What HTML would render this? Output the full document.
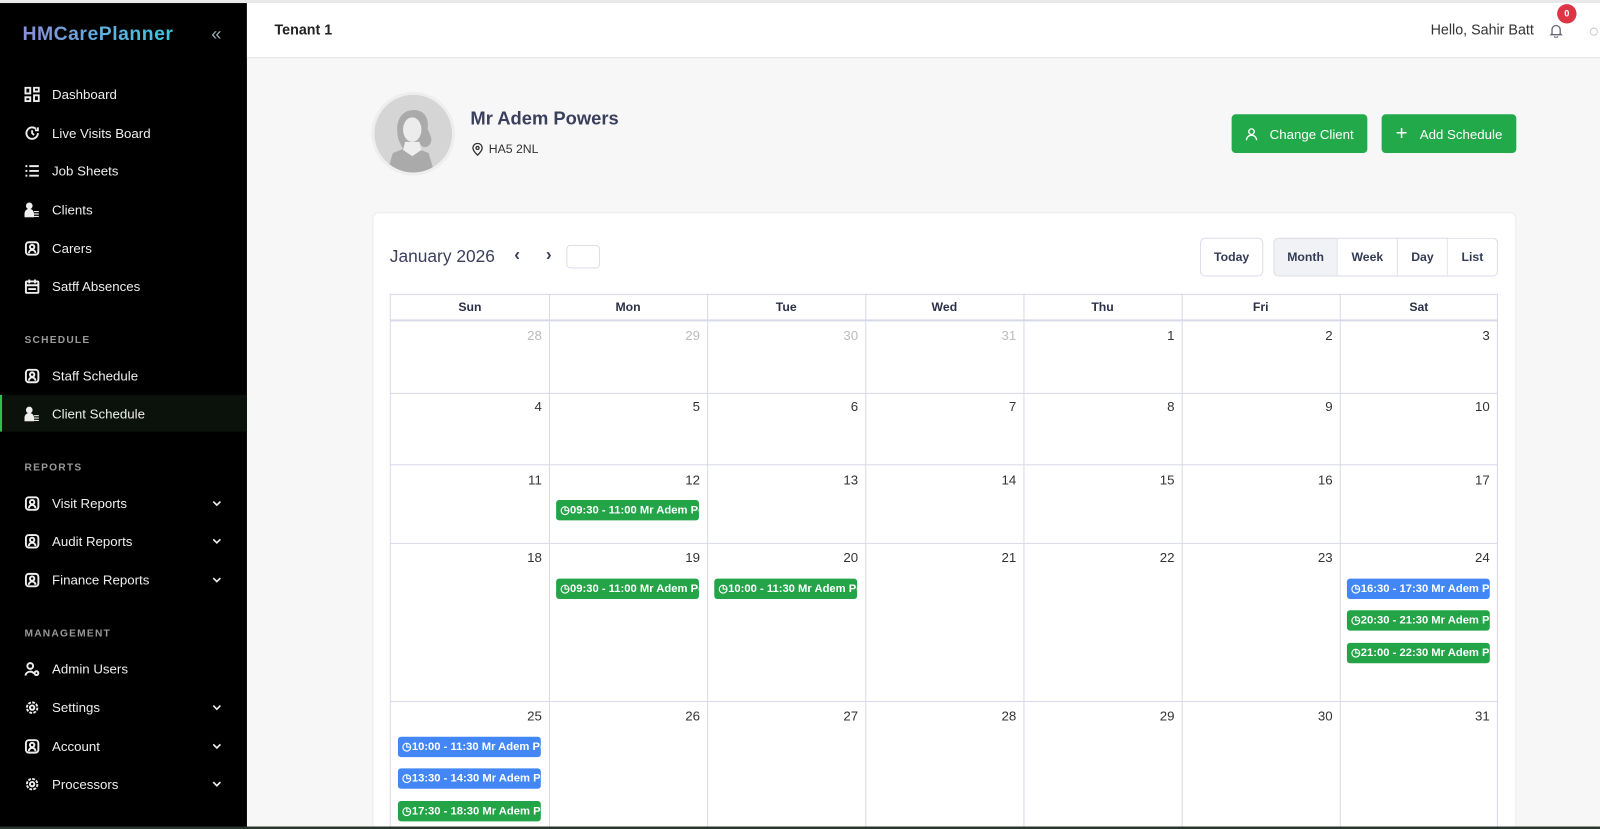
<!DOCTYPE html>
<html><head><meta charset="utf-8"><style>
*{box-sizing:border-box;margin:0;padding:0}
html,body{width:1600px;height:829px;overflow:hidden;background:#f7f7f8}
body{font-family:"Liberation Sans",sans-serif;position:relative}
#w{position:absolute;left:0;top:0;width:1568px;height:813px;transform:scale(1.0204);transform-origin:0 0}
.sb{position:absolute;left:0;top:3px;width:242px;height:810px;background:#000;color:#e8e8e8}
.logo{position:absolute;left:22px;top:20px;font-size:19px;font-weight:bold;letter-spacing:0.5px;background:linear-gradient(90deg,#8a8fd8,#3fc6e0);-webkit-background-clip:text;color:transparent}
.coll{position:absolute;left:207px;top:20px;color:#9aa;font-size:18px}
.it{position:absolute;left:0;width:242px;height:36px;display:flex;align-items:center;padding-left:24px;font-size:13px;color:#eee}
.it svg{width:15px;height:15px;margin-right:12px;stroke:#eee;fill:none;stroke-width:2}
.it svg.ch{position:absolute;left:208px;top:15px;width:9px;height:7px;margin:0;stroke-width:1.6}
.sec{position:absolute;left:24px;font-size:10px;letter-spacing:1.2px;color:#999;font-weight:bold}
.act{background:#0b120b;border-left:2px solid #2fbf4f}
.hd{position:absolute;left:242px;top:3px;right:0;height:54px;background:#fff;border-bottom:1px solid #e5e5e5}
.top{position:absolute;left:0;top:0;width:1568px;height:3px;background:#e9e9e9}
.bot{position:absolute;left:0;top:810px;width:1568px;height:5px;background:#2a332c}
.btn{position:absolute;top:112px;height:38px;background:#22a94a;color:#fff;border-radius:4px;font-size:13px;display:flex;align-items:center;justify-content:center}
.card{position:absolute;left:365px;top:208px;width:1121px;height:620px;background:#fff;border:1px solid #ececf0;border-radius:6px}
.vb{position:absolute;top:233px;height:38px;border:1px solid #dcdde6;font-size:12px;font-weight:bold;color:#333b55;display:flex;align-items:center;justify-content:center;background:#fff}
.g{position:absolute;border-color:#d8d9ea}
.dn{position:absolute;font-size:13px;color:#333}
.ev{position:absolute;width:140px;height:20px;border-radius:3px;color:#fff;font-size:11px;font-weight:bold;line-height:20px;padding-left:4px;white-space:nowrap;overflow:hidden}
.gr{background:#22a447}.bl{background:#4287f5}
.dh{position:absolute;top:288px;height:26px;line-height:26px;text-align:center;font-size:12px;font-weight:bold;color:#2c3147}
</style></head><body><div id="w">
<div class="top"></div>
<div class="sb">
<div class="logo">HMCarePlanner</div><div class="coll">«</div>
<div class="it" style="top:71px"><svg viewBox="0 0 16 16"><rect x="1" y="1" width="5" height="6"/><rect x="10" y="1" width="5" height="4"/><rect x="1" y="11" width="5" height="4"/><rect x="10" y="9" width="5" height="6"/></svg>Dashboard</div>
<div class="it" style="top:109px"><svg viewBox="0 0 16 16"><path d="M14 8a6 6 0 1 1-2-4.5M14 2v3h-3M8 5v3l2 2"/></svg>Live Visits Board</div>
<div class="it" style="top:146px"><svg viewBox="0 0 16 16"><path d="M1 3h2M5 3h10M1 8h2M5 8h10M1 13h2M5 13h10"/></svg>Job Sheets</div>
<div class="it" style="top:184px"><svg viewBox="0 0 16 16"><circle cx="5" cy="4" r="2.5" fill="#eee"/><path d="M1 15v-3a4 4 0 0 1 8 0v3z" fill="#eee"/><path d="M10 10h5M10 12.5h5M10 15h5" stroke-width="1.2"/></svg>Clients</div>
<div class="it" style="top:222px"><svg viewBox="0 0 16 16"><rect x="1.5" y="1.5" width="13" height="13" rx="3"/><circle cx="8" cy="6.5" r="2.3"/><path d="M4.5 13a3.5 3.5 0 0 1 7 0"/></svg>Carers</div>
<div class="it" style="top:259px"><svg viewBox="0 0 16 16"><rect x="1.5" y="3" width="13" height="12" rx="1"/><path d="M1.5 7h13M5 1v4M11 1v4M4 11h8"/></svg>Satff Absences</div>
<div class="sec" style="top:325px">SCHEDULE</div>
<div class="it" style="top:347px"><svg viewBox="0 0 16 16"><rect x="1.5" y="1.5" width="13" height="13" rx="3"/><circle cx="8" cy="6.5" r="2.3"/><path d="M4.5 13a3.5 3.5 0 0 1 7 0"/></svg>Staff Schedule</div>
<div class="it act" style="top:384px;padding-left:22px"><svg viewBox="0 0 16 16"><circle cx="5" cy="4" r="2.5" fill="#eee"/><path d="M1 15v-3a4 4 0 0 1 8 0v3z" fill="#eee"/><path d="M10 10h5M10 12.5h5M10 15h5" stroke-width="1.2"/></svg>Client Schedule</div>
<div class="sec" style="top:450px">REPORTS</div>
<div class="it" style="top:472px"><svg viewBox="0 0 16 16"><rect x="1.5" y="1.5" width="13" height="13" rx="3"/><circle cx="8" cy="6.5" r="2.3"/><path d="M4.5 13a3.5 3.5 0 0 1 7 0"/></svg>Visit Reports<svg class="ch" viewBox="0 0 9 7"><path d="M1 1.5l3.5 3.5 3.5-3.5"/></svg></div>
<div class="it" style="top:509px"><svg viewBox="0 0 16 16"><rect x="1.5" y="1.5" width="13" height="13" rx="3"/><circle cx="8" cy="6.5" r="2.3"/><path d="M4.5 13a3.5 3.5 0 0 1 7 0"/></svg>Audit Reports<svg class="ch" viewBox="0 0 9 7"><path d="M1 1.5l3.5 3.5 3.5-3.5"/></svg></div>
<div class="it" style="top:547px"><svg viewBox="0 0 16 16"><rect x="1.5" y="1.5" width="13" height="13" rx="3"/><circle cx="8" cy="6.5" r="2.3"/><path d="M4.5 13a3.5 3.5 0 0 1 7 0"/></svg>Finance Reports<svg class="ch" viewBox="0 0 9 7"><path d="M1 1.5l3.5 3.5 3.5-3.5"/></svg></div>
<div class="sec" style="top:613px">MANAGEMENT</div>
<div class="it" style="top:634px"><svg viewBox="0 0 16 16"><circle cx="6" cy="5" r="3"/><path d="M1 15a5 5 0 0 1 9-2"/><circle cx="12.5" cy="12.5" r="2"/></svg>Admin Users</div>
<div class="it" style="top:672px"><svg viewBox="0 0 16 16"><circle cx="8" cy="8" r="2.3"/><circle cx="8" cy="8" r="5.5" stroke-dasharray="3 1.3"/></svg>Settings<svg class="ch" viewBox="0 0 9 7"><path d="M1 1.5l3.5 3.5 3.5-3.5"/></svg></div>
<div class="it" style="top:710px"><svg viewBox="0 0 16 16"><rect x="1.5" y="1.5" width="13" height="13" rx="3"/><circle cx="8" cy="6.5" r="2.3"/><path d="M4.5 13a3.5 3.5 0 0 1 7 0"/></svg>Account<svg class="ch" viewBox="0 0 9 7"><path d="M1 1.5l3.5 3.5 3.5-3.5"/></svg></div>
<div class="it" style="top:747px"><svg viewBox="0 0 16 16"><circle cx="8" cy="8" r="2.3"/><circle cx="8" cy="8" r="5.5" stroke-dasharray="3 1.3"/></svg>Processors<svg class="ch" viewBox="0 0 9 7"><path d="M1 1.5l3.5 3.5 3.5-3.5"/></svg></div>
</div>
<div class="hd">
<div style="position:absolute;left:27px;top:18px;font-size:14px;font-weight:bold;color:#222">Tenant 1</div>
<div style="position:absolute;left:1160px;top:18px;font-size:14px;color:#333">Hello, Sahir Batt</div>
<svg style="position:absolute;left:1276px;top:20px" width="14" height="14" viewBox="0 0 14 14" fill="none" stroke="#667" stroke-width="1.3"><path d="M3 10V6a4 4 0 0 1 8 0v4l1 1H2zM5.5 12.5a1.5 1.5 0 0 0 3 0"/></svg>
<div style="position:absolute;left:1284px;top:1px;width:19px;height:19px;border-radius:50%;background:#dc3545;color:#fff;font-size:9px;font-weight:bold;text-align:center;line-height:19px">0</div>
<div style="position:absolute;left:1316px;top:24px;width:8px;height:8px;border-radius:50%;border:1px solid #ccc"></div>
</div>
<div style="position:absolute;left:364px;top:90px;width:82px;height:82px;border-radius:50%;background:#d5d5d5;border:3px solid #eee;overflow:hidden">
<svg width="76" height="76" viewBox="0 0 76 76"><path d="M24 45c-4-12-2-28 12-30 12-2 18 8 16 18 2 6 6 10 2 16-4 4-8 2-10-2l-1 6 10 4 6 20H12l6-20 10-4z" fill="#aaa"/><ellipse cx="37" cy="34" rx="9" ry="12" fill="#ececec"/><path d="M30 46h14l2 8-9 6-9-6z" fill="#eee"/></svg></div>
<div style="position:absolute;left:461px;top:106px;font-size:18px;font-weight:bold;color:#3a3f5c">Mr Adem Powers</div>
<svg style="position:absolute;left:462px;top:140px" width="12" height="13" viewBox="0 0 12 13" fill="none" stroke="#333" stroke-width="1.3"><path d="M6 12s-4.5-4-4.5-7a4.5 4.5 0 0 1 9 0c0 3-4.5 7-4.5 7z"/><circle cx="6" cy="5" r="1.5"/></svg>
<div style="position:absolute;left:479px;top:139px;font-size:12px;color:#333">HA5 2NL</div>
<div class="btn" style="left:1207px;width:133px"><svg width="13" height="13" viewBox="0 0 13 13" fill="none" stroke="#fff" stroke-width="1.3" style="margin-right:11px"><circle cx="6.5" cy="4" r="2.7"/><path d="M1.5 12.5a5 5 0 0 1 10 0"/></svg>Change Client</div>
<div class="btn" style="left:1354px;width:132px"><span style="font-size:20px;margin-right:12px;font-weight:300">+</span>Add Schedule</div>
<div class="card"></div>
<div style="position:absolute;left:382px;top:242px;font-size:17px;color:#3a3f5c">January 2026</div>
<div style="position:absolute;left:504px;top:240px;font-size:17px;font-weight:bold;color:#3a3f5c">‹</div>
<div style="position:absolute;left:535px;top:240px;font-size:17px;font-weight:bold;color:#3a3f5c">›</div>
<div style="position:absolute;left:555px;top:240px;width:33px;height:23px;border:1px solid #dcdde6;border-radius:4px"></div>
<div class="vb" style="left:1176px;width:62px;border-radius:5px">Today</div>
<div class="vb" style="left:1248px;width:63px;border-radius:5px 0 0 5px;background:#f1f2f6">Month</div>
<div class="vb" style="left:1310px;width:60px;border-left:1px solid #e3e4ea">Week</div>
<div class="vb" style="left:1369px;width:50px;border-left:1px solid #e3e4ea">Day</div>
<div class="vb" style="left:1418px;width:50px;border-left:1px solid #e3e4ea;border-radius:0 5px 5px 0">List</div>
<div class="g" style="left:382px;top:288px;width:1086px;height:540px;border:1px solid #d8d9ea;border-bottom:none"></div>
<div class="g" style="left:382px;top:313px;width:1086px;border-top:2px solid #d8d9ea"></div>
<div class="g" style="left:382px;top:385px;width:1086px;border-top:1px solid #d8d9ea"></div>
<div class="g" style="left:382px;top:455px;width:1086px;border-top:1px solid #d8d9ea"></div>
<div class="g" style="left:382px;top:532px;width:1086px;border-top:1px solid #d8d9ea"></div>
<div class="g" style="left:382px;top:687px;width:1086px;border-top:1px solid #d8d9ea"></div>
<div class="g" style="left:538px;top:288px;height:540px;border-left:1px solid #d8d9ea"></div>
<div class="g" style="left:693px;top:288px;height:540px;border-left:1px solid #d8d9ea"></div>
<div class="g" style="left:848px;top:288px;height:540px;border-left:1px solid #d8d9ea"></div>
<div class="g" style="left:1003px;top:288px;height:540px;border-left:1px solid #d8d9ea"></div>
<div class="g" style="left:1158px;top:288px;height:540px;border-left:1px solid #d8d9ea"></div>
<div class="g" style="left:1313px;top:288px;height:540px;border-left:1px solid #d8d9ea"></div>
<div class="dh" style="left:383px;width:155px">Sun</div><div class="dh" style="left:538px;width:155px">Mon</div><div class="dh" style="left:693px;width:155px">Tue</div><div class="dh" style="left:848px;width:155px">Wed</div><div class="dh" style="left:1003px;width:155px">Thu</div><div class="dh" style="left:1158px;width:155px">Fri</div><div class="dh" style="left:1313px;width:155px">Sat</div>
<div id="nums"></div>
<script>
var xs=[538,693,848,1003,1158,1313,1467],ys=[321,391,463,539,694];
var d=[[28,29,30,31,1,2,3],[4,5,6,7,8,9,10],[11,12,13,14,15,16,17],[18,19,20,21,22,23,24],[25,26,27,28,29,30,31]];
var h='';for(var r=0;r<5;r++)for(var c=0;c<7;c++){h+='<div class="dn" style="right:'+(1568-xs[c]+7)+'px;top:'+ys[r]+'px;'+(r==0&&c<4?'color:#bbb':'')+'">'+d[r][c]+'</div>';}
document.getElementById('nums').innerHTML=h;
</script>
<div class="ev gr" style="left:545px;top:490px">◷09:30 - 11:00 Mr Adem Powers</div>
<div class="ev gr" style="left:545px;top:567px">◷09:30 - 11:00 Mr Adem Powers</div>
<div class="ev gr" style="left:700px;top:567px">◷10:00 - 11:30 Mr Adem Powers</div>
<div class="ev bl" style="left:1320px;top:567px">◷16:30 - 17:30 Mr Adem Powers</div>
<div class="ev gr" style="left:1320px;top:598px">◷20:30 - 21:30 Mr Adem Powers</div>
<div class="ev gr" style="left:1320px;top:630px">◷21:00 - 22:30 Mr Adem Powers</div>
<div class="ev bl" style="left:390px;top:722px">◷10:00 - 11:30 Mr Adem Powers</div>
<div class="ev bl" style="left:390px;top:753px">◷13:30 - 14:30 Mr Adem Powers</div>
<div class="ev gr" style="left:390px;top:785px">◷17:30 - 18:30 Mr Adem Powers</div>
<div class="bot"></div>
</div></body></html>
